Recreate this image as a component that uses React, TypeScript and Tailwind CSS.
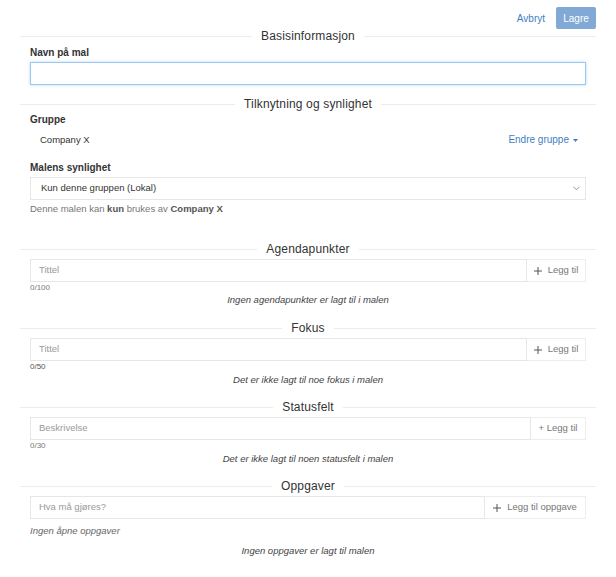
import React from "react";

function SectionTitle({ title, className = "" }: { title: string; className?: string }) {
  return (
    <div className={`flex items-center h-[14px] mx-[20px] ${className}`}>
      <div className="flex-1 h-px bg-[#ececec]" />
      <span className="px-[9px] text-[12px] leading-[14px] text-[#333] tracking-[0.15px]">{title}</span>
      <div className="flex-1 h-px bg-[#ececec]" />
    </div>
  );
}

function PlusIcon() {
  return (
    <svg width="8" height="8" viewBox="0 0 8 8" className="shrink-0">
      <path d="M4 0v8M0 4h8" stroke="#555" strokeWidth="1" />
    </svg>
  );
}

function AddRow({
  placeholder,
  label,
  icon = true,
  btnWidth,
}: {
  placeholder: string;
  label: string;
  icon?: boolean;
  btnWidth: string;
}) {
  return (
    <div className="flex h-[23px] mt-[3px]">
      <div className="flex-1 border border-[#e6e6e6] flex items-center px-[8px] text-[9.5px] text-[#9a9a9a]">
        {placeholder}
      </div>
      <div
        className={`${btnWidth} border border-l-0 border-[#ededed] flex items-center justify-center gap-[6px] text-[9.5px] text-[#777]`}
      >
        {icon ? <PlusIcon /> : null}
        <span>{icon ? label : `+ ${label}`}</span>
      </div>
    </div>
  );
}

export default function App() {
  return (
    <div className="w-[616px] h-[577px] bg-white text-[#333] font-['Liberation_Sans',Arial,sans-serif] overflow-hidden">
      {/* header actions */}
      <div className="flex justify-end items-center pt-[7px] pr-[20px] gap-[11px]">
        <span className="text-[10px] text-[#3f7fc0]">Avbryt</span>
        <div className="h-[22px] w-[40px] rounded-[2px] bg-[#80a9d6] flex items-center justify-center text-[10px] text-white">
          Lagre
        </div>
      </div>

      <SectionTitle title="Basisinformasjon" />
      <div className="px-[30px]">
        <div className="mt-[4px] text-[10px] leading-[12px] font-bold">Navn på mal</div>
        <div className="mt-[3px] h-[23px] border border-[#9cc8ef] shadow-[0_0_3px_rgba(102,175,233,0.45)]" />
      </div>

      <SectionTitle title="Tilknytning og synlighet" className="mt-[12px]" />
      <div className="px-[30px]">
        <div className="mt-[3px] text-[10px] leading-[12px] font-bold">Gruppe</div>
        <div className="mt-[8px] flex justify-between items-center text-[9.5px] leading-[12px]">
          <span className="pl-[10px]">Company X</span>
          <span className="flex items-center gap-[4px] pr-[8px] text-[10px] text-[#3f7fc0]">
            Endre gruppe
            <svg width="5" height="3" viewBox="0 0 5 3">
              <path d="M0 0h5L2.5 3z" fill="#3f7fc0" />
            </svg>
          </span>
        </div>
        <div className="mt-[16px] text-[10px] leading-[12px] font-bold">Malens synlighet</div>
        <div className="mt-[3px] h-[23px] border border-[#e6e6e6] flex items-center justify-between pl-[10px] pr-[5px] text-[9.5px]">
          <span>Kun denne gruppen (Lokal)</span>
          <svg width="7" height="5" viewBox="0 0 7 5">
            <path d="M0.5 0.8L3.5 3.8L6.5 0.8" stroke="#888" strokeWidth="0.9" fill="none" />
          </svg>
        </div>
        <div className="mt-[3px] text-[9.5px] leading-[12px] text-[#777]">
          Denne malen kan <b className="text-[#555]">kun</b> brukes av{" "}
          <b className="text-[#555]">Company X</b>
        </div>
      </div>

      <SectionTitle title="Agendapunkter" className="mt-[27px]" />
      <div className="px-[30px]">
        <AddRow placeholder="Tittel" label="Legg til" btnWidth="w-[59px]" />
        <div className="mt-[1px] text-[8px] leading-[10px] text-[#777]">0/100</div>
        <div className="mt-[1px] text-center italic text-[9.5px] leading-[12px] text-[#444]">
          Ingen agendapunkter er lagt til i malen
        </div>
      </div>

      <SectionTitle title="Fokus" className="mt-[15px]" />
      <div className="px-[30px]">
        <AddRow placeholder="Tittel" label="Legg til" btnWidth="w-[59px]" />
        <div className="mt-[1px] text-[8px] leading-[10px] text-[#555]">0/50</div>
        <div className="mt-[2px] text-center italic text-[9.5px] leading-[12px] text-[#444]">
          Det er ikke lagt til noe fokus i malen
        </div>
      </div>

      <SectionTitle title="Statusfelt" className="mt-[14px]" />
      <div className="px-[30px]">
        <AddRow placeholder="Beskrivelse" label="Legg til" icon={false} btnWidth="w-[55px]" />
        <div className="mt-[1px] text-[8px] leading-[10px] text-[#777]">0/30</div>
        <div className="mt-[2px] text-center italic text-[9.5px] leading-[12px] text-[#444]">
          Det er ikke lagt til noen statusfelt i malen
        </div>
      </div>

      <SectionTitle title="Oppgaver" className="mt-[14px]" />
      <div className="px-[30px]">
        <AddRow placeholder="Hva må gjøres?" label="Legg til oppgave" btnWidth="w-[101px]" />
        <div className="mt-[6px] italic text-[9.5px] leading-[12px] text-[#666]">Ingen åpne oppgaver</div>
        <div className="mt-[8px] text-center italic text-[9.5px] leading-[12px] text-[#444]">
          Ingen oppgaver er lagt til malen
        </div>
      </div>
    </div>
  );
}
